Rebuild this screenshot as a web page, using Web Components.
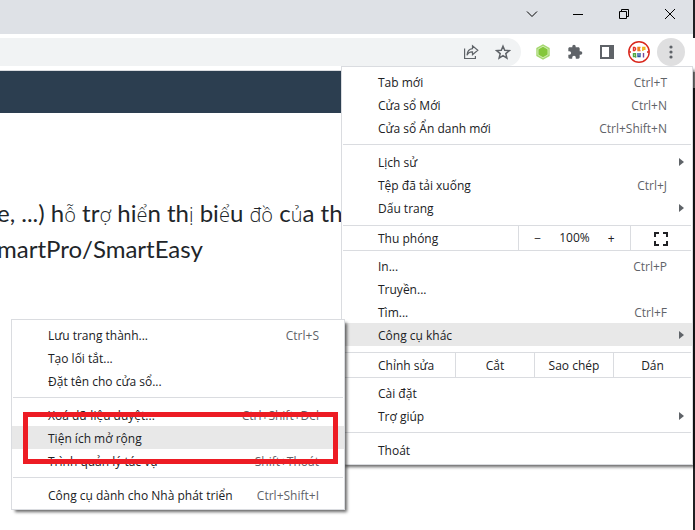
<!DOCTYPE html>
<html lang="vi">
<head>
<meta charset="utf-8">
<title>Chrome menu</title>
<style>
html, body { margin: 0; height: 100%; overflow: hidden; }
body { font: 12px/23px "Open Sans", "Noto Sans", sans-serif; color: #202124; background: #fff; }
</style>
</head>
<body>
<browser-window>
  <window-controls slot="title"></window-controls>
  <tool-bar slot="toolbar"></tool-bar>
  <page-content slot="page">
    <p>e, ...) h<i>ỗ</i> tr<i>ợ</i> hi<i>ể</i>n th<i>ị</i> bi<i>ể</i>u <i>đồ</i> c<i>ủ</i>a th<br>martPro/SmartEasy</p>
  </page-content>
  <menu-panel slot="menu">
    <menu-item keys="Ctrl+T">Tab mới</menu-item>
    <menu-item keys="Ctrl+N">Cửa sổ Mới</menu-item>
    <menu-item keys="Ctrl+Shift+N">Cửa sổ Ẩn danh mới</menu-item>
    <menu-line></menu-line>
    <menu-item arrow>Lịch sử</menu-item>
    <menu-item keys="Ctrl+J">Tệp đã tải xuống</menu-item>
    <menu-item arrow>Dấu trang</menu-item>
    <zoom-row>Thu phóng</zoom-row>
    <menu-item keys="Ctrl+P">In...</menu-item>
    <menu-item>Truyền...</menu-item>
    <menu-item keys="Ctrl+F">Tìm...</menu-item>
    <menu-item arrow active>Công cụ khác</menu-item>
    <edit-row>Chỉnh sửa</edit-row>
    <menu-item>Cài đặt</menu-item>
    <menu-item arrow>Trợ giúp</menu-item>
    <menu-line></menu-line>
    <menu-item>Thoát</menu-item>
  </menu-panel>
  <menu-panel slot="submenu">
    <menu-item keys="Ctrl+S">Lưu trang thành...</menu-item>
    <menu-item>Tạo lối tắt...</menu-item>
    <menu-item>Đặt tên cho cửa sổ...</menu-item>
    <menu-line></menu-line>
    <menu-item keys="Ctrl+Shift+Del">Xoá dữ liệu duyệt...</menu-item>
    <menu-item active marked>Tiện ích mở rộng</menu-item>
    <menu-item keys="Shift+Thoát">Trình quản lý tác vụ</menu-item>
    <menu-line></menu-line>
    <menu-item keys="Ctrl+Shift+I">Công cụ dành cho Nhà phát triển</menu-item>
  </menu-panel>
</browser-window>

<script>
const define = (name, html, setup) => customElements.define(name, class extends HTMLElement {
  constructor() {
    super();
    this.attachShadow({ mode: 'open' }).innerHTML = html;
  }
  connectedCallback() { if (setup) setup(this, this.shadowRoot); }
});

const reset = `:host,*{box-sizing:border-box}
button{font:inherit;color:inherit;background:none;border:0;margin:0;padding:0;text-align:left}
svg{display:block}`;

define('browser-window', `<style>
:host{display:grid;grid-template-columns:minmax(0,1fr) 2px;position:relative;height:100vh;overflow:hidden}
.main{display:flex;flex-direction:column;min-width:0}
.edge{display:grid;grid-template-rows:38px 34px 16px 1fr}
.edge :nth-child(1),.edge :nth-child(4){background:#202124}
.edge :nth-child(2){background:#fff}
.edge :nth-child(3){background:#a3a3a3}
::slotted([slot=page]){flex:1}
::slotted([slot=menu]){position:absolute;top:66px;right:2px;width:352px}
::slotted([slot=submenu]){position:absolute;top:319px;right:350px;width:334px;z-index:1}
</style>
<div class="main"><slot name="title"></slot><slot name="toolbar"></slot><slot name="page"></slot></div>
<div class="edge"><b></b><b></b><b></b><b></b></div>
<slot name="menu"></slot><slot name="submenu"></slot>`);

define('window-controls', `<style>${reset}
:host{display:flex;justify-content:flex-end;height:34px;background:#dee1e6;padding-bottom:6px}
button{width:46px;display:grid;place-items:center}
svg{fill:none;stroke:#000;stroke-width:1}
</style>
<button aria-label="Tìm kiếm thẻ"><svg width="12" height="12"><path d="M1 3.500l5 5 5-5"/></svg></button>
<button aria-label="Thu nhỏ"><svg width="12" height="12"><path d="M1 6.500h10"/></svg></button>
<button aria-label="Khôi phục"><svg width="12" height="12"><path d="M1.500 3.500h7v7h-7zM3.500 3V1.500h7v7H9"/></svg></button>
<button aria-label="Đóng"><svg width="12" height="12"><path d="M1 1l10 10M11 1L1 11"/></svg></button>`);

define('tool-bar', `<style>${reset}
:host{display:flex;align-items:center;height:37px;padding-right:8px;border-bottom:1px solid #dadce0;background:#fff}
.omni{flex:1;height:28px;background:#f1f3f4;border-radius:0 14px 14px 0;display:flex;justify-content:flex-end;align-items:center;gap:16px;padding-right:10px}
.acts{display:flex;align-items:center;gap:16px;padding-left:14px}
.acts .profile{margin-left:-3px}
.acts .more{width:28px;height:28px;border-radius:50%;background:#dfdfe0;display:grid;place-items:center;margin-left:-9px}
</style>
<div class="omni">
<button aria-label="Chia sẻ"><svg width="16" height="16" fill="none" stroke="#5f6368" stroke-width="1.200"><path d="M1.600 4.500v10h10.800v-2.500M9.500 4.700V1.700l5.300 4.500-5.300 4.500V7.900C7 7.700 5 9 4 11.200c.3-4 2.500-6.200 5.500-6.500z"/></svg></button>
<button aria-label="Dấu trang"><svg width="16" height="16" fill="none" stroke="#5f6368" stroke-width="1.500"><path d="M8 2.200l1.700 4 4.600.4-3.500 3 1.100 4.500L8 11.700l-3.900 2.400 1.100-4.500L1.700 6.600l4.600-.4z"/></svg></button>
</div>
<div class="acts">
<button aria-label="Tiện ích SmartPro"><svg width="16" height="16"><path d="M8 .3l6.700 3.800v7.800L8 15.700 1.300 11.900V4.100z" fill="#a5d870"/><path d="M8 2.300l5 2.850v5.700L8 13.700l-5-2.850v-5.700z" fill="#84c73b" stroke="#dff2ca" stroke-width=".8"/></svg></button>
<button aria-label="Tiện ích"><svg width="16" height="16" viewBox="0 0 24 24" fill="#5f6368"><path d="M20.500 11H19V7c0-1.100-.9-2-2-2h-4V3.500a2.500 2.500 0 0 0-5 0V5H4c-1.100 0-2 .9-2 2v3.800h1.500a2.700 2.700 0 0 1 0 5.400H2V20c0 1.100.9 2 2 2h3.800v-1.500a2.700 2.700 0 0 1 5.400 0V22H17c1.100 0 2-.9 2-2v-4h1.500a2.500 2.500 0 0 0 0-5z"/></svg></button>
<button aria-label="Bảng điều khiển bên"><svg width="16" height="16"><path fill="#5f6368" fill-rule="evenodd" d="M1 1h14v14H1zM3 3v10h7V3z"/></svg></button>
<button class="profile" aria-label="Hồ sơ"><svg width="22" height="22" fill="none"><circle cx="11" cy="11" r="10.200" fill="#fff" stroke="#d9271c" stroke-width="1.400"/><g stroke-width="1.400"><path stroke="#e5352b" d="M5.500 6.500v3h1l1-.8V7.200l-1-.7z"/><path stroke="#ee7d22" d="M12.500 6.500H10v3h2.500M10 8h2"/><path stroke="#f0b51e" d="M14.800 10V6.500h2v1.700h-2"/><path stroke="#52a844" d="M7.500 12.800H5.500v2.700h2zM7 15l1.200 1.500"/><path stroke="#2857a5" d="M10 12v3.500h2V12"/><path stroke="#7c4699" d="M15.500 12v4.500"/></g><path stroke="#d9271c" stroke-width="1.500" d="M1 11h2M19 11h2"/></svg></button>
<button class="more" aria-label="Trình đơn"><svg width="16" height="16" fill="#5f6368"><circle cx="8" cy="3" r="1.600"/><circle cx="8" cy="8" r="1.600"/><circle cx="8" cy="13" r="1.600"/></svg></button>
</div>`);

define('page-content', `<style>
:host{display:block;overflow:hidden;background:#fff;color:#212529;font:24px/36px Lato,sans-serif}
.band{height:42px;background:#2c3e50}
::slotted(p){margin:82px 0 0 -3px;white-space:nowrap}
</style><div class="band"></div><slot></slot>`, el => {
  el.querySelectorAll('i').forEach(i => { i.style.font = '300 20px/1 "Open Sans", sans-serif'; });
});

define('menu-panel', `<style>
:host{display:block;box-sizing:border-box;padding:3px 0;border:1px solid #dadce0;background:#fff;box-shadow:3px 3px 3px -1px #0009}
</style><slot></slot>`);

define('menu-item', `<style>${reset}
:host{display:block;position:relative}
button{display:flex;justify-content:space-between;width:100%;height:23px;padding:1px 25px 0 36px;line-height:23px;white-space:nowrap}
:host([active]) button{background:#e8e8e8}
.keys{color:#5f6368}
:host([arrow]) button::after{content:"";align-self:center;margin:-1px -17px 0 0;border:4px solid transparent;border-left:5px solid #5f6368;border-right:0}
:host([arrow]) .keys{display:none}
:host([marked])::after{content:"";position:absolute;z-index:2;top:-14px;bottom:-15px;left:11px;right:6px;border:5px solid #ed1c24}
</style><button><slot></slot><span class="keys"></span></button>`, (el, root) => {
  root.querySelector('.keys').textContent = el.getAttribute('keys') || '';
});

define('menu-line', `<style>
:host{display:block;height:1px;margin:5px 1px;background:#dadce0}
</style>`);

const rowStyle = `${reset}
:host{display:grid;height:26px;border:solid #dadce0;border-width:1px 0;line-height:24px;white-space:nowrap}
.label{padding:1px 0 0 35px}
.cell{border-left:1px solid #dadce0;text-align:center}`;

define('zoom-row', `<style>${rowStyle}
:host{grid-template-columns:1fr 112px 61px;margin:6px 1px 3px}
.zoom{display:grid;grid-template-columns:1fr 36px 1fr}
.zoom button{text-align:center}
.full{display:grid;place-items:center}
</style><span class="label"><slot></slot></span>
<div class="cell zoom"><button aria-label="Thu nhỏ">−</button><span>100%</span><button aria-label="Phóng to">+</button></div>
<button class="cell full" aria-label="Toàn màn hình"><svg width="14" height="14" fill="none" stroke="#202124" stroke-width="2"><path d="M1 5V1h4M9 1h4v4M13 9v4H9M5 13H1V9"/></svg></button>`);

define('edit-row', `<style>${rowStyle}
:host{grid-template-columns:1fr 79px 79px 78px;margin:6px 1px 3px}
</style><span class="label"><slot></slot></span>
<button class="cell">Cắt</button><button class="cell">Sao chép</button><button class="cell">Dán</button>`);
</script>
</body>
</html>
